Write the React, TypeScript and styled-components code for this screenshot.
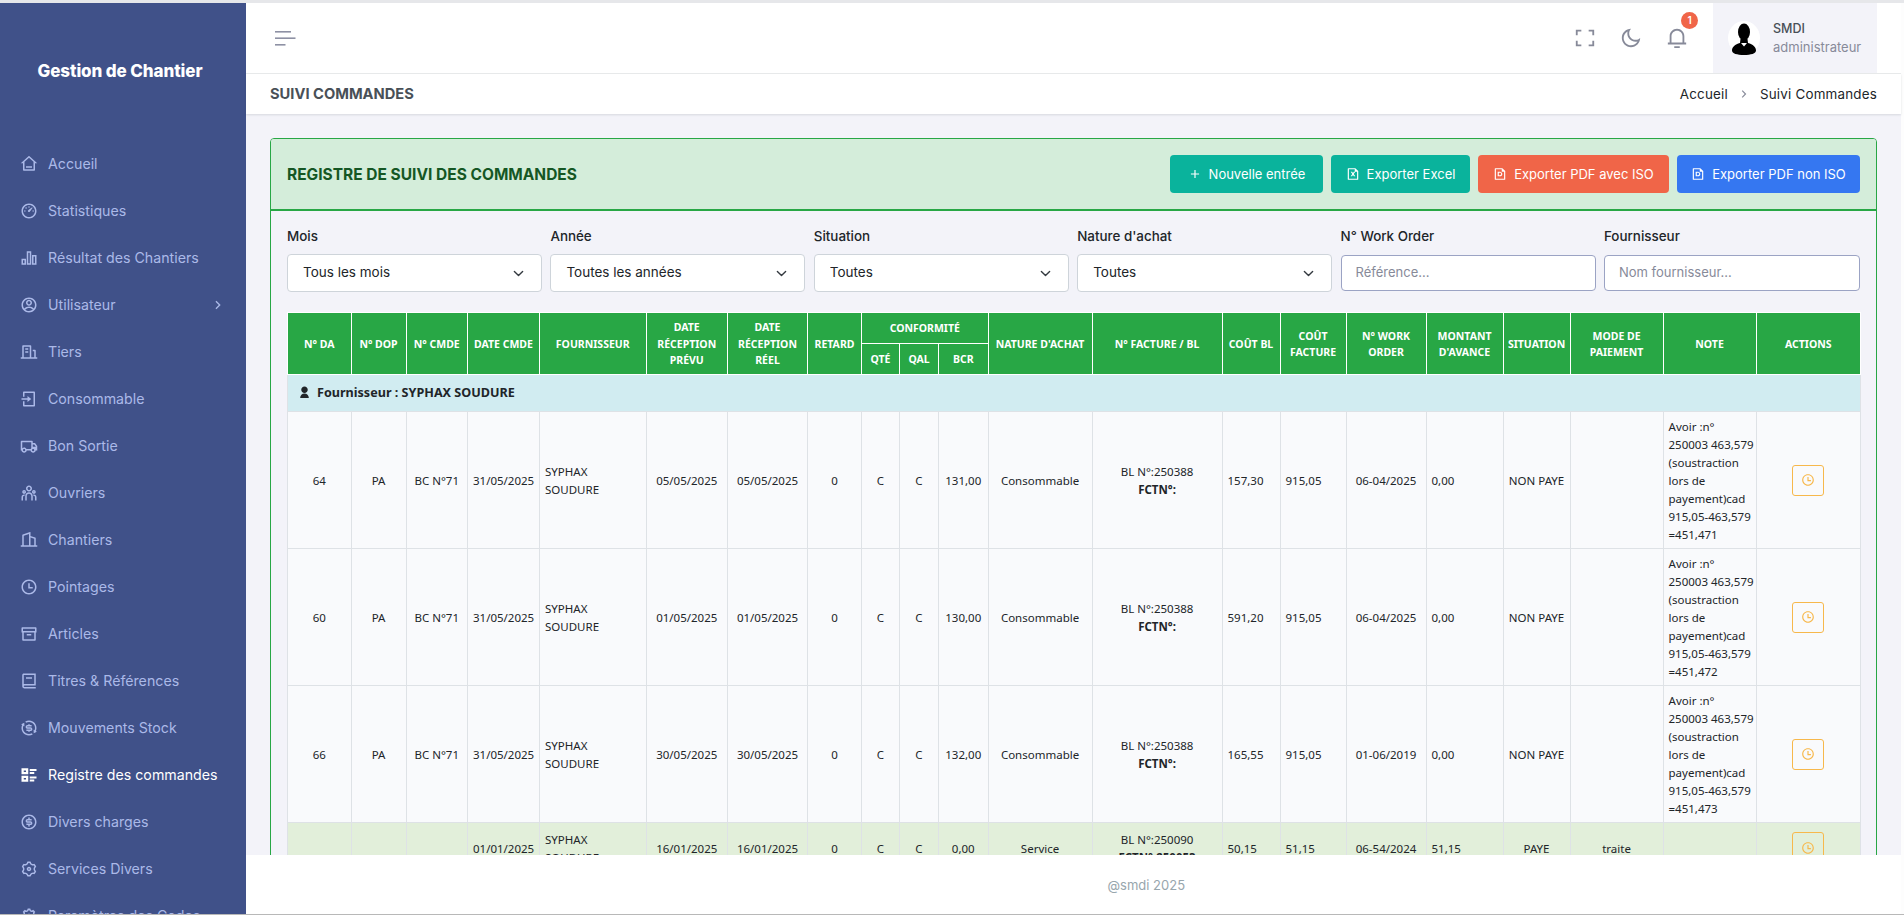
import styled, { createGlobalStyle } from "styled-components";
import type { ComponentType } from "react";
import {
  RiAccountCircleLine,
  RiAddLine,
  RiArchiveLine,
  RiArrowRightSLine,
  RiBarChart2Line,
  RiBook2Line,
  RiBuilding2Line,
  RiBuildingLine,
  RiDashboard3Line,
  RiExchangeDollarLine,
  RiFileExcelLine,
  RiFilePdfLine,
  RiFullscreenLine,
  RiHome3Line,
  RiLoginBoxLine,
  RiMoneyDollarCircleLine,
  RiMoonLine,
  RiNotification3Line,
  RiSettings3Line,
  RiSettings5Line,
  RiTeamLine,
  RiTimeLine,
  RiTruckLine,
  RiUserFill,
} from "react-icons/ri";

const UI_FONT = `"Inter", "Noto Sans", sans-serif`;
const TABLE_FONT = `"Noto Sans", "Open Sans", sans-serif`;

const GlobalStyle = createGlobalStyle`
  html, body {
    margin: 0;
    height: 100%;
    overflow: hidden;
    background: #fdfdfd;
  }
  * { box-sizing: border-box; }
`;

function ListIcon({ size = 18 }: { size?: number }) {
  return (
    <svg width={size} height={size} viewBox="0 0 24 24" fill="currentColor">
      <path
        fillRule="evenodd"
        d="M2 3h9v8H2zM5 6v2h3V6zM2 13h9v8H2zM5 16v2h3v-2zM13 4h9v2.5h-9zM13 8h6v2.5h-6zM13 14h9v2.5h-9zM13 18h6v2.5h-6z"
      />
    </svg>
  );
}

function MenuIcon() {
  return (
    <svg width="21" height="15" viewBox="0 0 21 15" fill="#8e91a4">
      <rect x="0" y="0" width="16" height="1.6" />
      <rect x="0" y="6.4" width="20.5" height="1.6" />
      <rect x="0" y="13" width="10.5" height="1.6" />
    </svg>
  );
}

function AvatarIcon() {
  return (
    <svg width="32" height="34" viewBox="0 0 32 34">
      <ellipse cx="16" cy="17" rx="16" ry="17" fill="#fff" />
      <ellipse cx="16" cy="11" rx="6" ry="8.5" fill="#000" />
      <path d="M12.5 18 L19.5 18 L20 22 C25 23.5 28 26 28 29.5 C28 32.5 23 34 16 34 C9 34 4 32.5 4 29.5 C4 26 7 23.5 12 22 Z" fill="#000" />
      <path d="M13 22 L16 25.5 L19 22 Z" fill="#fff" />
    </svg>
  );
}

type NavEntry = {
  label: string;
  Icon: ComponentType<{ size?: number }>;
  active?: boolean;
  hasChildren?: boolean;
};

const NAV: NavEntry[] = [
  { label: "Accueil", Icon: RiHome3Line },
  { label: "Statistiques", Icon: RiDashboard3Line },
  { label: "Résultat des Chantiers", Icon: RiBarChart2Line },
  { label: "Utilisateur", Icon: RiAccountCircleLine, hasChildren: true },
  { label: "Tiers", Icon: RiBuildingLine },
  { label: "Consommable", Icon: RiLoginBoxLine },
  { label: "Bon Sortie", Icon: RiTruckLine },
  { label: "Ouvriers", Icon: RiTeamLine },
  { label: "Chantiers", Icon: RiBuilding2Line },
  { label: "Pointages", Icon: RiTimeLine },
  { label: "Articles", Icon: RiArchiveLine },
  { label: "Titres & Références", Icon: RiBook2Line },
  { label: "Mouvements Stock", Icon: RiExchangeDollarLine },
  { label: "Registre des commandes", Icon: ListIcon, active: true },
  { label: "Divers charges", Icon: RiMoneyDollarCircleLine },
  { label: "Services Divers", Icon: RiSettings3Line },
  { label: "Paramètres des Codes", Icon: RiSettings5Line },
];

const COLUMNS = [63.5, 55, 61.5, 72, 106.5, 81.5, 80, 54, 38, 39, 49.5, 104, 130, 58, 66, 80, 77, 67, 93, 93, 104.5];

type Order = {
  da: string;
  dop: string;
  cmde: string;
  dateCmde: string;
  planned: string;
  real: string;
  bcr: string;
  nature: string;
  bl: string;
  fct: string;
  costBl: string;
  costFct: string;
  workOrder: string;
  advance: string;
  status: string;
  mode: string;
  note?: string;
  paid?: boolean;
};

const ORDERS: Order[] = [
  { da: "64", dop: "PA", cmde: "BC N°71", dateCmde: "31/05/2025", planned: "05/05/2025", real: "05/05/2025", bcr: "131,00", nature: "Consommable", bl: "BL N°:250388", fct: "FCTN°:", costBl: "157,30", costFct: "915,05", workOrder: "06-04/2025", advance: "0,00", status: "NON PAYE", mode: "", note: "=451,471" },
  { da: "60", dop: "PA", cmde: "BC N°71", dateCmde: "31/05/2025", planned: "01/05/2025", real: "01/05/2025", bcr: "130,00", nature: "Consommable", bl: "BL N°:250388", fct: "FCTN°:", costBl: "591,20", costFct: "915,05", workOrder: "06-04/2025", advance: "0,00", status: "NON PAYE", mode: "", note: "=451,472" },
  { da: "66", dop: "PA", cmde: "BC N°71", dateCmde: "31/05/2025", planned: "30/05/2025", real: "30/05/2025", bcr: "132,00", nature: "Consommable", bl: "BL N°:250388", fct: "FCTN°:", costBl: "165,55", costFct: "915,05", workOrder: "01-06/2019", advance: "0,00", status: "NON PAYE", mode: "", note: "=451,473" },
  { da: "", dop: "", cmde: "", dateCmde: "01/01/2025", planned: "16/01/2025", real: "16/01/2025", bcr: "0,00", nature: "Service", bl: "BL N°:250090", fct: "FCTN°:250053", costBl: "50,15", costFct: "51,15", workOrder: "06-54/2024", advance: "51,15", status: "PAYE", mode: "traite", paid: true },
];

const NOTE_LINES = ["Avoir :n°", "250003 463,579", "(soustraction", "lors de", "payement)cad", "915,05-463,579"];

export default function App() {
  return (
    <Frame>
      <GlobalStyle />
      <Sidebar>
        <Brand>Gestion de Chantier</Brand>
        <Nav>
          {NAV.map(({ label, Icon, active, hasChildren }) => (
            <NavItem key={label} $active={active}>
              <NavIcon>
                <Icon size={18} />
              </NavIcon>
              <span>{label}</span>
              {hasChildren && (
                <NavArrow>
                  <RiArrowRightSLine size={16} />
                </NavArrow>
              )}
            </NavItem>
          ))}
        </Nav>
      </Sidebar>

      <Main>
        <TopBar>
          <MenuIcon />
          <TopActions>
            <TopIcon><RiFullscreenLine size={22} /></TopIcon>
            <TopIcon><RiMoonLine size={22} /></TopIcon>
            <TopIcon>
              <RiNotification3Line size={22} />
              <Badge>1</Badge>
            </TopIcon>
            <UserBox>
              <AvatarIcon />
              <UserText>
                <UserName>SMDI</UserName>
                <UserRole>administrateur</UserRole>
              </UserText>
            </UserBox>
          </TopActions>
        </TopBar>

        <TitleBar>
          <PageTitle>SUIVI COMMANDES</PageTitle>
          <Crumbs>
            <span>Accueil</span>
            <RiArrowRightSLine size={14} color="#878a99" />
            <span>Suivi Commandes</span>
          </Crumbs>
        </TitleBar>

        <Content>
          <Card>
            <CardHead>
              <CardTitle>REGISTRE DE SUIVI DES COMMANDES</CardTitle>
              <Actions>
                <ActionButton $tone="#0ab39c" $w={153}><RiAddLine size={14} />Nouvelle entrée</ActionButton>
                <ActionButton $tone="#0ab39c" $w={139}><RiFileExcelLine size={14} />Exporter Excel</ActionButton>
                <ActionButton $tone="#f06548" $w={191}><RiFilePdfLine size={14} />Exporter PDF avec ISO</ActionButton>
                <ActionButton $tone="#3577f1" $w={183}><RiFilePdfLine size={14} />Exporter PDF non ISO</ActionButton>
              </Actions>
            </CardHead>

            <CardBody>
              <Filters>
                <Field>
                  <FieldLabel>Mois</FieldLabel>
                  <Select defaultValue="all"><option value="all">Tous les mois</option></Select>
                </Field>
                <Field>
                  <FieldLabel>Année</FieldLabel>
                  <Select defaultValue="all"><option value="all">Toutes les années</option></Select>
                </Field>
                <Field>
                  <FieldLabel>Situation</FieldLabel>
                  <Select defaultValue="all"><option value="all">Toutes</option></Select>
                </Field>
                <Field>
                  <FieldLabel>Nature d'achat</FieldLabel>
                  <Select defaultValue="all"><option value="all">Toutes</option></Select>
                </Field>
                <Field>
                  <FieldLabel>N° Work Order</FieldLabel>
                  <TextInput placeholder="Référence..." />
                </Field>
                <Field>
                  <FieldLabel>Fournisseur</FieldLabel>
                  <TextInput placeholder="Nom fournisseur..." />
                </Field>
              </Filters>

              <Table>
                <colgroup>
                  {COLUMNS.map((w, i) => (
                    <Col key={i} $w={w} />
                  ))}
                </colgroup>
                <thead>
                  <tr>
                    <Th rowSpan={2}>N° DA</Th>
                    <Th rowSpan={2}>N° DOP</Th>
                    <Th rowSpan={2}>N° CMDE</Th>
                    <Th rowSpan={2}>DATE CMDE</Th>
                    <Th rowSpan={2}>FOURNISSEUR</Th>
                    <Th rowSpan={2}>DATE RÉCEPTION PRÉVU</Th>
                    <Th rowSpan={2}>DATE RÉCEPTION RÉEL</Th>
                    <Th rowSpan={2}>RETARD</Th>
                    <Th colSpan={3}>CONFORMITÉ</Th>
                    <Th rowSpan={2}>NATURE D'ACHAT</Th>
                    <Th rowSpan={2}>N° FACTURE / BL</Th>
                    <Th rowSpan={2}>COÛT BL</Th>
                    <Th rowSpan={2}>COÛT FACTURE</Th>
                    <Th rowSpan={2}>N° WORK ORDER</Th>
                    <Th rowSpan={2}>MONTANT D'AVANCE</Th>
                    <Th rowSpan={2}>SITUATION</Th>
                    <Th rowSpan={2}>MODE DE PAIEMENT</Th>
                    <Th rowSpan={2}>NOTE</Th>
                    <Th rowSpan={2}>ACTIONS</Th>
                  </tr>
                  <tr>
                    <Th>QTÉ</Th>
                    <Th>QAL</Th>
                    <Th>BCR</Th>
                  </tr>
                </thead>
                <tbody>
                  <tr>
                    <GroupCell colSpan={COLUMNS.length}>
                      <RiUserFill size={13} />
                      Fournisseur : SYPHAX SOUDURE
                    </GroupCell>
                  </tr>
                  {ORDERS.map((o, i) => (
                    <Row key={i} $paid={o.paid}>
                      <Td>{o.da}</Td>
                      <Td>{o.dop}</Td>
                      <Td>{o.cmde}</Td>
                      <Td>{o.dateCmde}</Td>
                      <Td $left>SYPHAX<br />SOUDURE</Td>
                      <Td>{o.planned}</Td>
                      <Td>{o.real}</Td>
                      <Td>0</Td>
                      <Td>C</Td>
                      <Td>C</Td>
                      <Td>{o.bcr}</Td>
                      <Td>{o.nature}</Td>
                      <Td>{o.bl}<br /><strong>{o.fct}</strong></Td>
                      <Td $left>{o.costBl}</Td>
                      <Td $left>{o.costFct}</Td>
                      <Td>{o.workOrder}</Td>
                      <Td $left>{o.advance}</Td>
                      <Td>{o.status}</Td>
                      <Td>{o.mode}</Td>
                      <Td $left>
                        {o.note && (
                          <>
                            {NOTE_LINES.map((line) => (
                              <NoteLine key={line}>{line}</NoteLine>
                            ))}
                            <NoteLine>{o.note}</NoteLine>
                          </>
                        )}
                      </Td>
                      <ActionCell>
                        <ClockButton><RiTimeLine size={14} /></ClockButton>
                      </ActionCell>
                    </Row>
                  ))}
                </tbody>
              </Table>
            </CardBody>
          </Card>
        </Content>

        <Footer>
          <span />
          <FooterText>@smdi 2025</FooterText>
        </Footer>
      </Main>
    </Frame>
  );
}

const Frame = styled.div`
  display: flex;
  height: 100vh;
  overflow: hidden;
  border-top: 3px solid #e6e7ea;
  border-bottom: 1px solid #b8b8b8;
  font-family: ${UI_FONT};
`;

const Sidebar = styled.aside`
  flex: 0 0 246px;
  background: #405189;
  overflow: hidden;
`;

const Brand = styled.div`
  height: 137px;
  padding: 58px 6px 0 0;
  font-size: 17px;
  line-height: 20px;
  font-weight: 800;
  letter-spacing: -0.1px;
  text-align: center;
  color: #fff;
`;

const Nav = styled.nav`
  display: flex;
  flex-direction: column;
`;

const NavItem = styled.div<{ $active?: boolean }>`
  display: flex;
  align-items: center;
  flex: 0 0 47px;
  height: 47px;
  padding-left: 19.5px;
  font-size: 14.2px;
  color: ${(p) => (p.$active ? "#fff" : "#abb9e8")};
  white-space: nowrap;
`;

const NavIcon = styled.span`
  display: flex;
  width: 28.5px;
`;

const NavArrow = styled.span`
  display: flex;
  margin-left: auto;
  margin-right: 20px;
`;

const Main = styled.div`
  flex: 1;
  min-width: 0;
  display: flex;
  flex-direction: column;
  border-right: 3px solid #fdfdfd;
`;

const TopBar = styled.header`
  flex: 0 0 71px;
  display: flex;
  align-items: center;
  justify-content: space-between;
  padding: 0 24px 0 29px;
  background: #fff;
  border-bottom: 1px solid #e9ebec;
`;

const TopActions = styled.div`
  display: flex;
  align-items: center;
  height: 100%;
`;

const TopIcon = styled.span`
  position: relative;
  display: flex;
  justify-content: center;
  width: 46px;
  color: #878a99;
`;

const Badge = styled.span`
  position: absolute;
  top: -15px;
  right: 2px;
  width: 17px;
  height: 17px;
  border-radius: 50%;
  background: #f06548;
  color: #fff;
  font-size: 10px;
  font-weight: 600;
  line-height: 17px;
  text-align: center;
`;

const UserBox = styled.div`
  display: flex;
  align-items: center;
  gap: 13px;
  width: 164px;
  height: 100%;
  margin-left: 13px;
  padding-left: 15px;
  background: #f3f3f9;
`;

const UserText = styled.div`
  display: flex;
  flex-direction: column;
`;

const UserName = styled.span`
  font-size: 12.5px;
  line-height: 19px;
  font-weight: 500;
  color: #495057;
`;

const UserRole = styled.span`
  font-size: 13px;
  line-height: 19px;
  color: #878a99;
`;

const TitleBar = styled.div`
  flex: 0 0 40px;
  display: flex;
  align-items: center;
  justify-content: space-between;
  padding: 0 24px;
  background: #fff;
  box-shadow: 0 1px 2px rgba(56, 65, 74, 0.15);
  position: relative;
`;

const PageTitle = styled.h1`
  margin: 0;
  font-size: 14.7px;
  font-weight: 700;
  color: #495057;
`;

const Crumbs = styled.div`
  display: flex;
  align-items: center;
  gap: 9px;
  font-size: 13.4px;
  letter-spacing: 0.2px;
  color: #212529;
`;

const Content = styled.main`
  flex: 1;
  min-height: 0;
  overflow: hidden;
  padding: 24px 24px 0;
  background: #f3f3f9;
`;

const Card = styled.section`
  border: 1px solid #28a745;
  border-radius: 4px;
`;

const CardHead = styled.div`
  display: flex;
  align-items: center;
  justify-content: space-between;
  height: 72px;
  padding: 0 16px;
  background: #d4edda;
  border-bottom: 2px solid #28a745;
  border-radius: 3px 3px 0 0;
`;

const CardTitle = styled.h2`
  margin: 0;
  font-size: 15.5px;
  font-weight: 700;
  color: #155724;
`;

const Actions = styled.div`
  display: flex;
  gap: 8px;
`;

const ActionButton = styled.button<{ $tone: string; $w: number }>`
  display: flex;
  align-items: center;
  justify-content: center;
  gap: 7px;
  width: ${(p) => p.$w}px;
  height: 38px;
  padding: 0;
  border: 0;
  border-radius: 4px;
  background: ${(p) => p.$tone};
  color: #fff;
  font-family: ${UI_FONT};
  font-size: 13px;
`;

const CardBody = styled.div`
  padding: 16px 16px 0;
`;

const Filters = styled.div`
  display: grid;
  grid-template-columns: repeat(5, 255px) 256px;
  gap: 8.4px;
  margin-bottom: 20px;
`;

const Field = styled.div`
  display: flex;
  flex-direction: column;
`;

const FieldLabel = styled.label`
  height: 27px;
  font-size: 13.4px;
  line-height: 19.5px;
  font-weight: 500;
  color: #212529;
`;

const Select = styled.select`
  appearance: none;
  height: 38px;
  padding: 0 15px 2px;
  border: 1px solid #ced4da;
  border-radius: 4px;
  background: #fff url("data:image/svg+xml,%3csvg xmlns='http://www.w3.org/2000/svg' viewBox='0 0 16 16'%3e%3cpath fill='none' stroke='%23343a40' stroke-linecap='round' stroke-linejoin='round' stroke-width='2' d='m2 5 6 6 6-6'/%3e%3c/svg%3e") no-repeat right 16px center / 13px 11px;
  color: #212529;
  font-family: ${UI_FONT};
  font-size: 13.5px;
`;

const TextInput = styled.input`
  height: 36px;
  margin-top: 1px;
  padding: 0 14px 2px;
  border: 1px solid #9ba3c4;
  border-radius: 4px;
  background: #fff;
  color: #212529;
  font-family: ${UI_FONT};
  font-size: 13px;
  &::placeholder { color: #878a99; }
`;

const Table = styled.table`
  width: 1573px;
  table-layout: fixed;
  border-collapse: collapse;
  font-family: ${TABLE_FONT};
  font-size: 11.5px;
  line-height: 18px;
  color: #212529;
`;

const Col = styled.col<{ $w: number }>`
  width: ${(p) => p.$w}px;
`;

const Th = styled.th`
  padding: 1px 2px 0;
  height: 31px;
  background: #28a745;
  border: 1px solid #fff;
  color: #fff;
  font-size: 10.5px;
  line-height: 16.5px;
  font-weight: 700;
  text-align: center;
  vertical-align: middle;
`;

const GroupCell = styled.td`
  height: 37px;
  padding: 0 10px;
  background: #d1ecf1;
  border: 1px solid #dee2e6;
  font-size: 12.6px;
  font-weight: 700;
  svg {
    vertical-align: -2px;
    margin-right: 6px;
  }
`;

const Row = styled.tr<{ $paid?: boolean }>`
  background: ${(p) => (p.$paid ? "#e2efda" : "#f9fafc")};
`;

const Td = styled.td<{ $left?: boolean }>`
  padding: 6px 5px 4px;
  height: 50px;
  border: 1px solid #dee2e6;
  text-align: ${(p) => (p.$left ? "left" : "center")};
  vertical-align: middle;
  strong { font-weight: 700; }
`;

const ActionCell = styled(Td)`
  padding: 5px;
`;

const NoteLine = styled.div`
  white-space: nowrap;
`;

const ClockButton = styled.button`
  display: inline-flex;
  align-items: center;
  justify-content: center;
  width: 32px;
  height: 31px;
  padding: 0;
  border: 1px solid #f7b84b;
  border-radius: 3px;
  background: transparent;
  color: #f7b84b;
  vertical-align: middle;
`;

const Footer = styled.footer`
  flex: 0 0 59px;
  display: grid;
  grid-template-columns: 1fr 1fr;
  align-items: center;
  padding: 0 24px;
  background: #fff;
`;

const FooterText = styled.span`
  padding-left: 34px;
  font-size: 13px;
  color: #98a6ad;
`;
